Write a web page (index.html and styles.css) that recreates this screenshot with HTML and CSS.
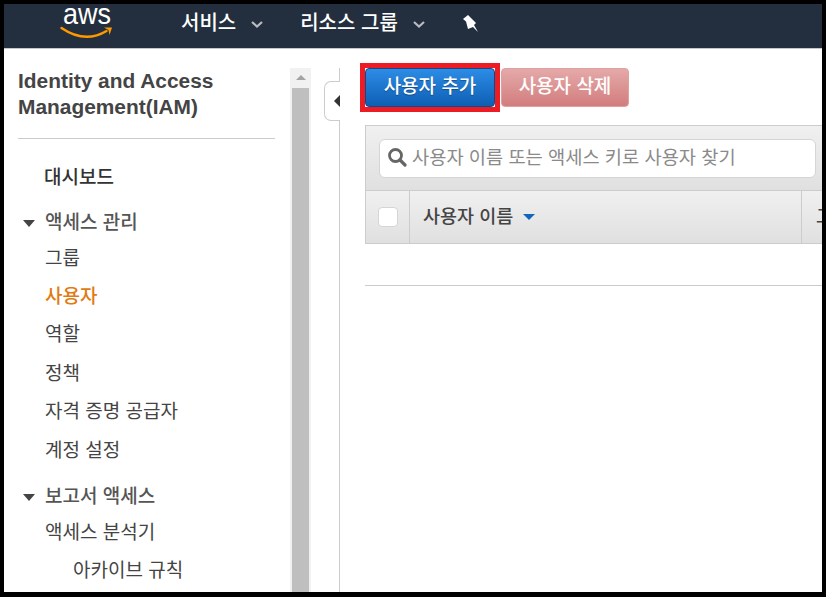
FILE: index.html
```html
<!DOCTYPE html>
<html lang="ko">
<head>
<meta charset="utf-8">
<title>IAM 사용자</title>
<link rel="stylesheet" href="styles.css">
</head>
<body>
<div class="frame">
  <header class="topbar">
    <svg class="logo" width="54" height="34" viewBox="0 0 54 34">
      <text x="3" y="17" class="logo-text" textLength="48" lengthAdjust="spacingAndGlyphs">aws</text>
      <path d="M1.5 21 Q25 37 46.5 24" fill="none" stroke="#f90" stroke-width="2.4" stroke-linecap="round"/>
      <path d="M44 20.5 L52 20.5 L49.5 28 L48.5 23 Z" fill="#f90"/>
    </svg>
    <span class="nav-label nav-services">서비스</span>
    <svg class="chev chev-services" width="12" height="7" viewBox="0 0 12 7"><path d="M1 1 L6 5.5 L11 1" fill="none" stroke="#b8bcc2" stroke-width="2.2"/></svg>
    <span class="nav-label nav-groups">리소스 그룹</span>
    <svg class="chev chev-groups" width="12" height="7" viewBox="0 0 12 7"><path d="M1 1 L6 5.5 L11 1" fill="none" stroke="#b8bcc2" stroke-width="2.2"/></svg>
    <svg class="pin" width="17" height="18" viewBox="0 0 17 18"><path d="M6 1 L1 5 L4 7.5 L6 15 L11 13 L16 18 L12 11 L14 9 Z" fill="#fff"/></svg>
  </header>
  <div class="body">
    <aside class="sidebar">
      <h1 class="title">Identity and Access Management(IAM)</h1>
      <hr class="rule">
      <nav class="menu">
        <a class="item dash">대시보드</a>
        <div class="section first"><span class="caret"></span>액세스 관리</div>
        <a class="item">그룹</a>
        <a class="item active">사용자</a>
        <a class="item">역할</a>
        <a class="item">정책</a>
        <a class="item">자격 증명 공급자</a>
        <a class="item">계정 설정</a>
        <div class="section"><span class="caret"></span>보고서 액세스</div>
        <a class="item">액세스 분석기</a>
        <a class="item sub">아카이브 규칙</a>
      </nav>
    </aside>
    <div class="scrollbar"><span class="arrow"></span><span class="thumb"></span></div>
    <main class="main">
      <button class="collapse" aria-label="접기"><span class="collapse-arrow"></span></button>
      <div class="actions">
        <div class="highlight"><button class="btn primary">사용자 추가</button></div>
        <button class="btn danger">사용자 삭제</button>
      </div>
      <section class="table">
        <div class="search-row">
          <div class="search">
            <svg width="20" height="20" viewBox="0 0 20 20"><circle cx="8.5" cy="8.5" r="6" fill="none" stroke="#666" stroke-width="2.8"/><path d="M13 13 L18 18" stroke="#666" stroke-width="3.2" stroke-linecap="round"/></svg>
            <span class="placeholder">사용자 이름 또는 액세스 키로 사용자 찾기</span>
          </div>
        </div>
        <div class="head-row">
          <div class="cell check"><span class="checkbox"></span></div>
          <div class="cell name">사용자 이름<span class="sort"></span></div>
          <div class="cell next">그룹</div>
        </div>
        <div class="empty-row"></div>
      </section>
    </main>
  </div>
</div>
</body>
</html>
```

FILE: styles.css
```css
* { box-sizing: border-box; }
html, body { margin: 0; padding: 0; height: 100%; overflow: hidden; }
body { font-family: "Noto Sans CJK KR", "Liberation Sans", sans-serif; background: #000; }
.frame {
  width: 826px; height: 597px;
  border-style: solid; border-color: #000;
  border-width: 4px 4px 5px 4px;
  background: #fff;
  display: flex; flex-direction: column;
  overflow: hidden;
}
.topbar {
  height: 45px; flex: none;
  background: #232f3e;
  border-bottom: 1px solid #c8c8c8;
  display: flex; align-items: center;
  padding-left: 56px;
  color: #fff;
}
.logo { margin-bottom: 5px; flex: none; overflow: visible; }
.logo-text { font: 30px "Liberation Sans", sans-serif; fill: #fff; }
.nav-label { font-size: 20px; font-weight: 500; line-height: 24px; color: #fff; margin-bottom: 8px; white-space: nowrap; }
.nav-services { margin-left: 67px; }
.nav-groups { margin-left: 37px; }
.chev { flex: none; margin-bottom: 3px; }
.chev-services { margin-left: 15px; }
.chev-groups { margin-left: 15px; }
.pin { margin-left: 37px; flex: none; margin-bottom: 7px; }

.body { flex: 1; display: flex; min-height: 0; }
.sidebar { width: 286px; flex: none; padding: 19px 15px 0 14px; overflow: hidden; color: #444; }
.title {
  margin: 0; font: bold 20.9px/26px "Liberation Sans", sans-serif; color: #444;
}
.rule { border: 0; border-top: 1px solid #ccc; margin: 18px 0 0; }
.menu { display: flex; flex-direction: column; padding-top: 18.6px; }
.item {
  display: block; height: 38.4px; line-height: 36px;
  padding-left: 27px; font-size: 19px; color: #444; white-space: nowrap;
}
.dash { font-weight: 500; height: 38px; color: #333; padding-left: 26px; }
.active { color: #e07b10; font-weight: 500; }
.sub { padding-left: 55px; }
.section {
  height: 36px; line-height: 36px;
  padding-left: 27px; font-size: 19px; font-weight: 500; color: #555;
  position: relative; white-space: nowrap;
}
.section.first { margin-top: 7px; }
.section:not(.first) { margin-top: 8px; }
.caret {
  position: absolute; left: 5px; top: 17px;
  border: 6px solid transparent; border-top: 7px solid #444; border-bottom: 0;
}

.scrollbar { width: 21px; flex: none; margin-top: 19px; background: #f1f1f1; display: flex; flex-direction: column; align-items: center; }
.arrow { margin-top: 7px; border: 5px solid transparent; border-bottom: 5px solid #a3a3a3; border-top: 0; }
.thumb { width: 17px; flex: 1; margin-top: 8px; background: #bfbfbf; }

.main {
  flex: 1; min-width: 0; margin-left: 28px; margin-top: 19px;
  border-left: 1px solid #ccc; padding-left: 25px;
  position: relative;
}
.collapse {
  position: absolute; left: -16px; top: 13px;
  width: 16px; height: 40px; padding: 0;
  background: #fff; border: 1px solid #ccc; border-right: 0;
  border-radius: 7px 0 0 7px;
  display: flex; align-items: center; justify-content: flex-end;
}
.collapse-arrow { border: 6px solid transparent; border-right: 6px solid #333; border-left: 0; }

.actions { display: flex; align-items: flex-start; margin: -5px 0 0 -5px; }
.highlight { border: 5px solid #ed1c24; background: #fff; flex: none; }
.btn {
  display: block; height: 39px; padding: 0 0 6px;
  font: 500 19px/1 "Noto Sans CJK KR", sans-serif; color: #fff;
  border-radius: 4px; cursor: pointer; white-space: nowrap;
}
.primary {
  width: 130px;
  background: linear-gradient(#2d8ce6, #0e5fb4);
  border: 1px solid #0d4a87;
  text-shadow: 0 1px 1px rgba(0,0,0,.35);
}
.danger {
  width: 128px; margin: 5px 0 0 1px;
  background: linear-gradient(#e5a9a9, #d27d7d);
  border: 1px solid #dfa0a0;
}

.table { margin-top: 13px; }
.search-row {
  height: 66px; padding: 13px 6px 0 13px;
  background: linear-gradient(#f0f0f0, #e0e0e0);
  border-top: 1px solid #ccc; border-left: 1px solid #ccc; border-bottom: 1px solid #ccc;
}
.search {
  height: 39px; padding: 0 0 6px 7px;
  background: #fff; border: 1px solid #d5d5d5; border-radius: 6px;
  display: flex; align-items: center; gap: 5px;
  white-space: nowrap;
}
.search svg { flex: none; margin-top: 2px; }
.placeholder { font-size: 18.7px; color: #8a8a8a; }
.head-row {
  height: 53px; display: flex;
  background: linear-gradient(#f0f0f0, #e0e0e0);
  border-left: 1px solid #ccc; border-bottom: 1px solid #ccc;
  font-size: 18.5px; font-weight: 500; color: #444;
  overflow: hidden;
}
.cell { display: flex; align-items: center; border-right: 1px solid #ccc; flex: none; white-space: nowrap; padding-bottom: 5px; }
.check { width: 44px; justify-content: center; padding-bottom: 0; }
.checkbox { width: 20px; height: 20px; background: #fff; border: 1px solid #d5d5d5; border-radius: 4px; }
.name { width: 392px; padding-left: 13px; }
.sort { margin-left: 10px; margin-top: 4px; border: 6.5px solid transparent; border-top: 6px solid #1166bb; border-bottom: 0; }
.next { padding-left: 14px; border-right: 0; }
.empty-row { height: 42px; border-bottom: 1px solid #ccc; }
```
